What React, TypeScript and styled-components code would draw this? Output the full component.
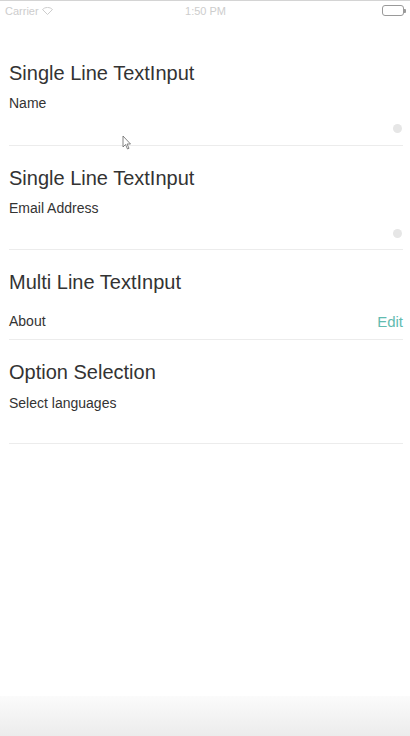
import React from "react";
import styled, { createGlobalStyle } from "styled-components";

const Global = createGlobalStyle`
  html, body { margin: 0; padding: 0; background: #fff; }
  body { font-family: "Liberation Sans", Arial, Helvetica, sans-serif; }
  * { box-sizing: border-box; }
`;

const Page = styled.div`
  position: relative;
  width: 410px;
  height: 736px;
  display: flex;
  flex-direction: column;
  background: #fff;
  border-top: 1px solid #d4d4d4;
  overflow: hidden;
`;

const StatusBar = styled.div`
  height: 19px;
  display: grid;
  grid-template-columns: 1fr auto 1fr;
  align-items: center;
  padding: 0 4px 0 5px;
  font-size: 11px;
  color: #cdcdcd;
`;

const Carrier = styled.div`
  display: flex;
  align-items: center;
  gap: 3px;
`;

const Clock = styled.div`
  text-align: center;
`;

const Battery = styled.div`
  justify-self: end;
  display: flex;
  align-items: center;
`;

const BatteryBody = styled.div`
  width: 22px;
  height: 11px;
  border: 1px solid #9a9a9a;
  border-radius: 3px;
`;

const BatteryNub = styled.div`
  width: 2px;
  height: 4px;
  background: #9a9a9a;
  border-radius: 0 1px 1px 0;
`;

const Content = styled.div`
  flex: 1;
  padding-top: 21px;
  display: flex;
  flex-direction: column;
`;

const Section = styled.div`
  padding: 20px 7px 0 9px;
`;

const Title = styled.div`
  font-size: 20px;
  line-height: 24px;
  color: #333;
`;

const Label = styled.div<{ $gap?: number }>`
  margin-top: ${(p) => p.$gap ?? 10}px;
  font-size: 14px;
  line-height: 17px;
  color: #333;
`;

const Field = styled.div<{ $h: number }>`
  height: ${(p) => p.$h}px;
  border-bottom: 1px solid #ececec;
  display: flex;
  align-items: center;
  justify-content: flex-end;
`;

const Dot = styled.div`
  width: 9px;
  height: 9px;
  border-radius: 50%;
  background: #e6e6e6;
  margin-right: 1px;
`;

const EditRow = styled.div`
  margin-top: 10px;
  height: 36px;
  border-bottom: 1px solid #ececec;
  display: flex;
  align-items: center;
  justify-content: space-between;
  padding-bottom: 1px;
`;

const RowLabel = styled.span`
  font-size: 14px;
  color: #333;
`;

const EditLink = styled.span`
  font-size: 15px;
  color: #62bbb0;
`;

const BottomBar = styled.div`
  height: 40px;
  background: linear-gradient(#fbfbfb, #ececec);
`;

const Cursor = styled.svg`
  position: absolute;
  left: 122px;
  top: 134px;
`;

export default function App() {
  return (
    <>
      <Global />
      <Page>
        <StatusBar>
          <Carrier>
            <span>Carrier</span>
            <svg width="11" height="8" viewBox="0 0 11 8">
              <path d="M0.5 2.5 A7 7 0 0 1 10.5 2.5 L5.5 7.5 Z" fill="none" stroke="#cdcdcd" strokeWidth="1" />
            </svg>
          </Carrier>
          <Clock>1:50 PM</Clock>
          <Battery>
            <BatteryBody />
            <BatteryNub />
          </Battery>
        </StatusBar>
        <Content>
          <Section>
            <Title>Single Line TextInput</Title>
            <Label>Name</Label>
            <Field $h={34}>
              <Dot />
            </Field>
          </Section>
          <Section>
            <Title>Single Line TextInput</Title>
            <Label>Email Address</Label>
            <Field $h={33}>
              <Dot />
            </Field>
          </Section>
          <Section>
            <Title>Multi Line TextInput</Title>
            <EditRow>
              <RowLabel>About</RowLabel>
              <EditLink>Edit</EditLink>
            </EditRow>
          </Section>
          <Section>
            <Title>Option Selection</Title>
            <Label $gap={11}>Select languages</Label>
            <Field $h={32} />
          </Section>
        </Content>
        <BottomBar />
        <Cursor width="10" height="16" viewBox="0 0 10 16">
          <path d="M1 1 L1 12 L3.5 9.5 L5.5 14 L7 13.3 L5 9 L8.5 9 Z" fill="#fff" stroke="#666" strokeWidth="0.8" />
        </Cursor>
      </Page>
    </>
  );
}
